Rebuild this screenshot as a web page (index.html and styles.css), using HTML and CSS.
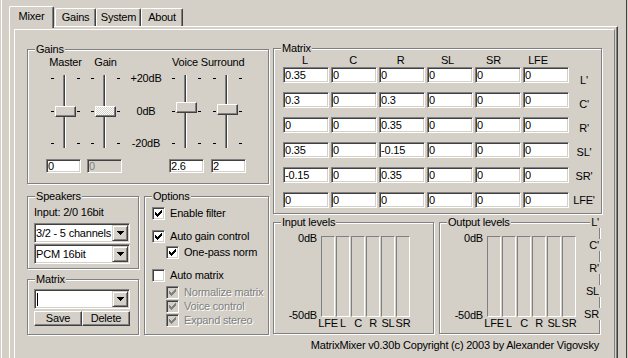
FILE: index.html
```html
<!DOCTYPE html>
<html>
  <head>
    <title>MatrixMixer</title>
    <link rel="stylesheet" href="styles.css">
  </head>
  <body>
    <svg class="defs" width="0" height="0">
      <defs>
        <path id="check" d="M6 0h1v1h-1z M5 1h2v1h-2z M0 2h1v1h-1z M4 2h3v1h-3z M0 3h2v1h-2z M3 3h3v1h-3z M0 4h5v1h-5z M1 5h3v1h-3z M2 6h1v1h-1z"/>
        <path id="arrow" d="M0 0h7v1h-1v1h-1v1h-1v1h-1v-1h-1v-1h-1v-1h-1z"/>
      </defs>
    </svg>
    <div class="window">
      <div class="tabs">
        <div class="tab tab-mixer active">Mixer</div>
        <div class="tab tab-gains">Gains</div>
        <div class="tab tab-system">System</div>
        <div class="tab tab-about">About</div>
      </div>
      <div class="page">
        <div class="panel">

          <div class="col-left">
            <div class="group gains">
              <span class="group-title">Gains</span>
              <div class="gain-grid">
                <span class="head c1">Master</span>
                <span class="head c3">Gain</span>
                <span class="head head-vs">Voice Surround</span>

                <div class="slider c1">
                  <div class="ticks"><i></i><i></i><i></i></div>
                  <div class="track"><div class="groove"></div><div class="thumb" style="top:34px"></div></div>
                  <div class="ticks"><i></i><i></i><i></i></div>
                </div>
                <div class="slider c3">
                  <div class="ticks"><i></i><i></i><i></i></div>
                  <div class="track"><div class="groove"></div><div class="thumb disabled" style="top:34px"></div></div>
                  <div class="ticks"><i></i><i></i><i></i></div>
                </div>
                <div class="db-scale c4">
                  <span>+20dB</span>
                  <span>0dB</span>
                  <span>-20dB</span>
                </div>
                <div class="slider c5">
                  <div class="ticks"><i></i><i></i><i></i></div>
                  <div class="track"><div class="groove"></div><div class="thumb" style="top:30px"></div></div>
                  <div class="ticks"><i></i><i></i><i></i></div>
                </div>
                <div class="slider c7">
                  <div class="ticks"><i></i><i></i><i></i></div>
                  <div class="track"><div class="groove"></div><div class="thumb" style="top:32px"></div></div>
                  <div class="ticks"><i></i><i></i><i></i></div>
                </div>
              </div>
              <div class="gain-edits">
                <div class="edit small e-master">0</div>
                <div class="edit small disabled e-gain">0</div>
                <div class="edit small e-voice">2.6</div>
                <div class="edit small e-surround">2</div>
              </div>
            </div>

            <div class="row-bottom">
              <div class="stack">
                <div class="group speakers">
                  <span class="group-title">Speakers</span>
                  <div class="line">Input: 2/0 16bit</div>
                  <div class="combo">
                    <div class="combo-text">3/2 - 5 channels</div>
                    <div class="combo-btn"><svg width="7" height="4"><use href="#arrow"/></svg></div>
                  </div>
                  <div class="combo next">
                    <div class="combo-text">PCM 16bit</div>
                    <div class="combo-btn"><svg width="7" height="4"><use href="#arrow"/></svg></div>
                  </div>
                </div>
                <div class="group presets">
                  <span class="group-title">Matrix</span>
                  <div class="combo">
                    <div class="combo-text"><span class="caret"></span></div>
                    <div class="combo-btn"><svg width="7" height="4"><use href="#arrow"/></svg></div>
                  </div>
                  <div class="buttons">
                    <div class="btn btn-save">Save</div>
                    <div class="btn btn-delete">Delete</div>
                  </div>
                </div>
              </div>

              <div class="group options">
                <span class="group-title">Options</span>
                <div class="check r1"><span class="box"><svg width="7" height="7"><use href="#check"/></svg></span>Enable filter</div>
                <div class="check r2"><span class="box"><svg width="7" height="7"><use href="#check"/></svg></span>Auto gain control</div>
                <div class="check r3 sub"><span class="box"><svg width="7" height="7"><use href="#check"/></svg></span>One-pass norm</div>
                <div class="check r4"><span class="box"></span>Auto matrix</div>
                <div class="check r5 sub disabled"><span class="box"><svg width="7" height="7"><use href="#check"/></svg></span>Normalize matrix</div>
                <div class="check sub disabled"><span class="box"><svg width="7" height="7"><use href="#check"/></svg></span>Voice control</div>
                <div class="check sub disabled"><span class="box"><svg width="7" height="7"><use href="#check"/></svg></span>Expand stereo</div>
              </div>
            </div>
          </div>

          <div class="col-right">
            <div class="group matrix">
              <span class="group-title">Matrix</span>
              <div class="matrix-heads">
                <span>L</span><span>C</span><span>R</span><span>SL</span><span>SR</span><span>LFE</span>
              </div>
              <div class="matrix-body">
                <div class="cells">
                  <div class="edit">0.35</div><div class="edit">0</div><div class="edit">0</div><div class="edit">0</div><div class="edit">0</div><div class="edit">0</div>
                  <div class="edit">0.3</div><div class="edit">0</div><div class="edit">0.3</div><div class="edit">0</div><div class="edit">0</div><div class="edit">0</div>
                  <div class="edit">0</div><div class="edit">0</div><div class="edit">0.35</div><div class="edit">0</div><div class="edit">0</div><div class="edit">0</div>
                  <div class="edit">0.35</div><div class="edit">0</div><div class="edit">-0.15</div><div class="edit">0</div><div class="edit">0</div><div class="edit">0</div>
                  <div class="edit">-0.15</div><div class="edit">0</div><div class="edit">0.35</div><div class="edit">0</div><div class="edit">0</div><div class="edit">0</div>
                  <div class="edit">0</div><div class="edit">0</div><div class="edit">0</div><div class="edit">0</div><div class="edit">0</div><div class="edit">0</div>
                </div>
                <div class="row-labels">
                  <span>L'</span><span>C'</span><span>R'</span><span>SL'</span><span>SR'</span><span>LFE'</span>
                </div>
              </div>
            </div>

            <div class="levels">
              <div class="group level">
                <span class="group-title">Input levels</span>
                <div class="scale"><span>0dB</span><span>-50dB</span></div>
                <div class="meter">
                  <div class="bars"><i></i><i></i><i></i><i></i><i></i><i></i></div>
                  <div class="bar-names"><span>LFE</span><span>L</span><span>C</span><span>R</span><span>SL</span><span>SR</span></div>
                </div>
              </div>
              <div class="group level">
                <span class="group-title">Output levels</span>
                <div class="scale"><span>0dB</span><span>-50dB</span></div>
                <div class="meter">
                  <div class="bars"><i></i><i></i><i></i><i></i><i></i><i></i></div>
                  <div class="bar-names"><span>LFE</span><span>L</span><span>C</span><span>R</span><span>SL</span><span>SR</span></div>
                </div>
                <div class="out-names"><span>L'</span><span>C'</span><span>R'</span><span>SL</span><span>SR</span></div>
              </div>
            </div>

            <div class="status">MatrixMixer v0.30b Copyright (c) 2003 by Alexander Vigovsky</div>
          </div>

        </div>
      </div>
    </div>
  </body>
</html>
```

FILE: styles.css
```css
body {
  margin: 0;
  width: 628px;
  height: 358px;
  overflow: hidden;
  background: #d4d0c8;
  color: #000;
  font-family: "Liberation Sans", Arial, sans-serif;
  font-size: 11px;
  letter-spacing: -0.2px;
}
.defs {
  position: absolute;
}

/* window + tabs */
.window {
  box-sizing: border-box;
  width: 626px;
  height: 358px;
  margin-left: 1px;
  border-left: 1px solid #fff;
  border-right: 1px solid #404040;
  padding: 6px 8px 0 7px;
}
.tabs {
  display: flex;
  height: 20px;
}
.tab {
  box-sizing: border-box;
  height: 18px;
  margin-top: 2px;
  line-height: 17px;
  text-align: center;
  border-top: 1px solid #fff;
  border-left: 1px solid #fff;
  border-right: 1px solid #404040;
  border-radius: 2px 2px 0 0;
  box-shadow: inset -1px 0 #808080;
}
.tab.active {
  position: relative;
  z-index: 1;
  height: 22px;
  margin-top: 0;
  margin-right: 1px;
  line-height: 19px;
  background: #d4d0c8;
}
.tab-mixer { width: 45px; }
.tab-gains { width: 41px; }
.tab-system { width: 45px; }
.tab-about { width: 42px; }

.page {
  box-sizing: border-box;
  height: 332px;
  border-top: 1px solid #fff;
  border-left: 1px solid #fff;
  border-right: 1px solid #404040;
  box-shadow: inset -1px 0 #808080;
  padding: 2px 2px 0 4px;
}
.panel {
  box-sizing: border-box;
  height: 100%;
  border-top: 1px solid #fff;
  border-left: 1px solid #fff;
  border-right: 1px solid #808080;
  padding: 18px 0 0 12px;
  display: flex;
  gap: 4px;
}

/* common controls */
.group {
  position: relative;
  box-sizing: border-box;
  border: 1px solid #808080;
  box-shadow: inset 1px 1px #fff, 1px 1px #fff;
}
.group-title {
  position: absolute;
  top: -7px;
  left: 7px;
  padding: 0 1px;
  line-height: 12px;
  background: #d4d0c8;
  white-space: nowrap;
}
.edit {
  box-sizing: border-box;
  height: 16px;
  padding: 0 1px;
  line-height: 14px;
  background: #fff;
  border: 1px solid;
  border-color: #808080 #fff #fff #808080;
  box-shadow: inset 1px 1px #404040, inset -1px -1px #d4d0c8;
  white-space: nowrap;
  overflow: hidden;
}
.edit.small {
  width: 35px;
  height: 14px;
  line-height: 12px;
}
.edit.disabled {
  background: #d4d0c8;
  color: #808080;
}
.combo {
  box-sizing: border-box;
  display: flex;
  width: 96px;
  height: 20px;
  padding: 1px;
  background: #fff;
  border: 1px solid;
  border-color: #808080 #fff #fff #808080;
  box-shadow: inset 1px 1px #404040, inset -1px -1px #d4d0c8;
}
.combo.next {
  margin-top: 1px;
}
.combo-text {
  flex: 1;
  overflow: hidden;
  white-space: nowrap;
  line-height: 16px;
}
.caret {
  display: inline-block;
  width: 1px;
  height: 13px;
  margin: 2px 0 0 1px;
  background: #000;
  vertical-align: top;
}
.combo-btn {
  box-sizing: border-box;
  width: 16px;
  height: 16px;
  display: flex;
  align-items: center;
  justify-content: center;
  background: #d4d0c8;
  border: 1px solid;
  border-color: #d4d0c8 #404040 #404040 #d4d0c8;
  box-shadow: inset 1px 1px #fff, inset -1px -1px #808080;
}
.combo-btn svg {
  display: block;
  fill: #000;
}
.btn {
  box-sizing: border-box;
  height: 15px;
  line-height: 13px;
  text-align: center;
  border: 1px solid;
  border-color: #fff #404040 #404040 #fff;
  box-shadow: inset -1px -1px #808080;
}

/* left column */
.col-left {
  width: 242px;
  padding-top: 1px;
}
.gains {
  height: 135px;
  padding: 6px 0 0 23px;
}
.gain-grid {
  display: grid;
  grid-template-columns: 29px 11px 29px 52px 29px 12px 29px;
  grid-template-rows: 12px 80px;
  row-gap: 4px;
}
.head {
  justify-self: center;
  line-height: 12px;
  white-space: nowrap;
}
.head-vs {
  grid-column: 5 / 8;
  justify-self: start;
}
.c1 { grid-column: 1; }
.c3 { grid-column: 3; }
.c4 { grid-column: 4; }
.c5 { grid-column: 5; }
.c7 { grid-column: 7; }
.slider {
  grid-row: 2;
  display: flex;
  height: 80px;
}
.ticks {
  box-sizing: border-box;
  width: 3px;
  height: 80px;
  padding: 6px 0 8px;
  display: flex;
  flex-direction: column;
  justify-content: space-between;
}
.ticks i {
  display: block;
  height: 1px;
  background: #000;
}
.track {
  position: relative;
  flex: 1;
}
.groove {
  width: 1px;
  height: 73px;
  margin: 3px 0 0 9px;
  background: #404040;
  border-left: 1px solid #808080;
  border-right: 1px solid #fff;
}
.thumb {
  position: absolute;
  left: 1px;
  box-sizing: border-box;
  width: 21px;
  height: 11px;
  background: #d4d0c8;
  border: 1px solid;
  border-color: #fff #404040 #404040 #fff;
  box-shadow: inset -1px -1px #808080;
}
.thumb.disabled {
  background: repeating-conic-gradient(#fff 0 25%, #d4d0c8 0 50%) 0 0 / 2px 2px;
}
.db-scale {
  grid-row: 2;
  height: 77px;
  display: flex;
  flex-direction: column;
  justify-content: space-between;
  align-items: center;
  line-height: 12px;
}
.gain-edits {
  display: flex;
  margin-top: 7px;
}
.e-master { margin-left: -5px; }
.e-gain { margin-left: 6px; }
.e-voice { margin-left: 47px; }
.e-surround { margin-left: 7px; }

.row-bottom {
  display: flex;
  gap: 5px;
  margin-top: 12px;
}
.stack {
  width: 112px;
}
.speakers {
  height: 73px;
  padding: 9px 0 0 6px;
}
.line {
  line-height: 12px;
  margin-bottom: 5px;
}
.presets {
  height: 56px;
  margin-top: 10px;
  padding: 9px 0 0 6px;
}
.buttons {
  display: flex;
  margin-top: 2px;
}
.btn-save { width: 48px; }
.btn-delete { width: 48px; }

.options {
  width: 125px;
  height: 139px;
  padding: 9px 0 0 7px;
}
.check {
  display: flex;
  align-items: center;
  gap: 5px;
  height: 14px;
  white-space: nowrap;
}
.check.sub { margin-left: 14px; }
.r2 { margin-top: 9px; }
.r3 { margin-top: 2px; }
.r4 { margin-top: 9px; }
.r5 { margin-top: 3px; }
.box {
  box-sizing: border-box;
  width: 13px;
  height: 13px;
  display: flex;
  align-items: center;
  justify-content: center;
  background: #fff;
  border: 1px solid;
  border-color: #808080 #fff #fff #808080;
  box-shadow: inset 1px 1px #404040, inset -1px -1px #d4d0c8;
}
.box svg {
  display: block;
  fill: #000;
}
.check.disabled {
  color: #808080;
  text-shadow: 1px 1px #fff;
}
.check.disabled .box {
  background: #d4d0c8;
}
.check.disabled .box svg {
  fill: #808080;
}

/* right column */
.col-right {
  width: 329px;
}
.matrix {
  height: 166px;
  padding: 5px 0 0 9px;
}
.matrix-heads {
  display: grid;
  grid-template-columns: 48px 48px 47px 47px 45px 44px;
  margin-left: -2px;
  line-height: 12px;
  text-align: center;
}
.matrix-body {
  display: flex;
  margin-top: 1px;
}
.cells {
  display: grid;
  grid-template-columns: repeat(6, 46px);
  grid-auto-rows: 16px;
  column-gap: 2px;
  row-gap: 9px;
}
.row-labels {
  width: 22px;
  margin-left: 4px;
  padding-top: 1px;
  display: flex;
  flex-direction: column;
  align-items: center;
  line-height: 24px;
}

.levels {
  display: flex;
  gap: 5px;
  margin-top: 8px;
}
.level {
  display: flex;
  width: 161px;
  height: 112px;
  padding-top: 9px;
}
.scale {
  width: 43px;
  height: 89px;
  display: flex;
  flex-direction: column;
  justify-content: space-between;
  align-items: flex-end;
  line-height: 12px;
}
.meter {
  margin: 4px 0 0 4px;
}
.bars,
.bar-names {
  display: flex;
  gap: 1px;
}
.bars i {
  box-sizing: border-box;
  width: 14px;
  height: 81px;
  border: 1px solid;
  border-color: #808080 #fff #fff #808080;
}
.bar-names span {
  width: 14px;
  display: flex;
  justify-content: center;
  line-height: 12px;
  white-space: nowrap;
}
.out-names {
  position: absolute;
  top: -7px;
  right: -2px;
  display: flex;
  flex-direction: column;
  align-items: flex-end;
}
.out-names span {
  line-height: 12px;
  margin-bottom: 11px;
  padding: 0 2px 0 1px;
  background: #d4d0c8;
}
.status {
  margin-top: 5px;
  padding-right: 3px;
  line-height: 12px;
  text-align: right;
  white-space: nowrap;
}
```
